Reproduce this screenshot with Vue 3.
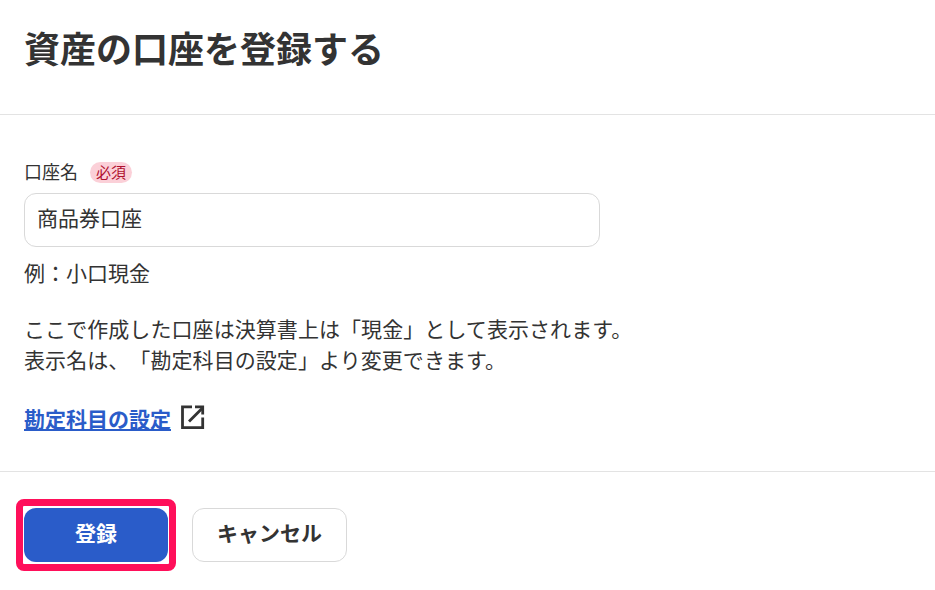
<script setup>
const accountName = '商品券口座'
</script>

<template>
  <div class="dialog">
    <header class="head">
      <h1>資産の口座を登録する</h1>
    </header>

    <section class="body">
      <div class="label-row">
        <label>口座名</label>
        <span class="required">必須</span>
      </div>
      <input class="name-input" type="text" :value="accountName" />
      <p class="example">例：小口現金</p>
      <p class="note">
        ここで作成した口座は決算書上は「現金」として表示されます。<br />
        表示名は、「勘定科目の設定」より変更できます。
      </p>
      <div class="link-row">
        <a href="#" class="link">勘定科目の設定</a>
        <svg width="26" height="26" viewBox="0 0 26 26" fill="none" stroke="#333" stroke-width="2.8">
          <path d="M12 1.8H2.5v20.8h20.2v-10" />
          <path d="M9 16.5 22 3.5" />
          <path d="M15 1.8h7.7v7.7" />
        </svg>
      </div>
    </section>

    <footer class="foot">
      <div class="primary-wrap">
        <button class="btn primary">登録</button>
        <span class="highlight"></span>
      </div>
      <button class="btn secondary">キャンセル</button>
    </footer>
  </div>
</template>

<style>
html, body {
  margin: 0;
  background: #fff;
}
</style>

<style scoped>
.dialog {
  width: 935px;
  height: 590px;
  overflow: hidden;
  color: #333;
  font-family: "Noto Sans CJK JP", "Noto Sans", sans-serif;
  text-spacing-trim: space-all;
}

.head {
  height: 115px;
  padding: 23px 24px 0;
  box-sizing: border-box;
  border-bottom: 1px solid #e3e3e3;
}

h1 {
  margin: 0;
  font-size: 36px;
  line-height: 48px;
  font-weight: 700;
}

.body {
  height: 357px;
  padding: 46px 24px 0;
  box-sizing: border-box;
  border-bottom: 1px solid #e3e3e3;
}

.label-row {
  display: flex;
  align-items: center;
  gap: 12px;
  height: 22px;
}

label {
  font-size: 18px;
  line-height: 20px;
  padding-bottom: 2px;
}

.required {
  width: 42px;
  height: 21px;
  border-radius: 11px;
  background: #fbd0d8;
  color: #b01030;
  font-size: 15px;
  line-height: 19px;
  text-align: center;
}

.name-input {
  display: block;
  width: 576px;
  height: 54px;
  margin-top: 10px;
  padding: 0 12px 6px;
  box-sizing: border-box;
  border: 1px solid #d9d9d9;
  border-radius: 12px;
  color: #333;
  font-family: inherit;
  font-size: 21px;
  outline: none;
}

.example {
  margin: 10px 0 0;
  font-size: 21px;
  line-height: 30px;
}

.note {
  margin: 26px 0 0;
  font-size: 21px;
  line-height: 31px;
  letter-spacing: 0.07px;
}

.link-row {
  display: flex;
  align-items: center;
  gap: 9px;
  margin-top: 28px;
}

.link {
  color: #2a5cc9;
  font-size: 21px;
  font-weight: 700;
  line-height: 30px;
}

.foot {
  display: flex;
  gap: 24px;
  padding: 36px 24px 0;
}

.primary-wrap {
  position: relative;
  display: flex;
}

.btn {
  height: 54px;
  padding: 0 0 6px;
  box-sizing: border-box;
  border-radius: 12px;
  font-family: inherit;
  font-size: 21px;
  font-weight: 700;
}

.primary {
  width: 144px;
  border: none;
  background: #2a5cc9;
  color: #fff;
}

.secondary {
  width: 155px;
  border: 1px solid #d9d9d9;
  background: #fff;
  color: #333;
}

.highlight {
  position: absolute;
  left: -8px;
  top: -9px;
  width: 160px;
  height: 72px;
  box-sizing: border-box;
  border: 7px solid #ff0f5a;
  border-radius: 8px;
}
</style>
